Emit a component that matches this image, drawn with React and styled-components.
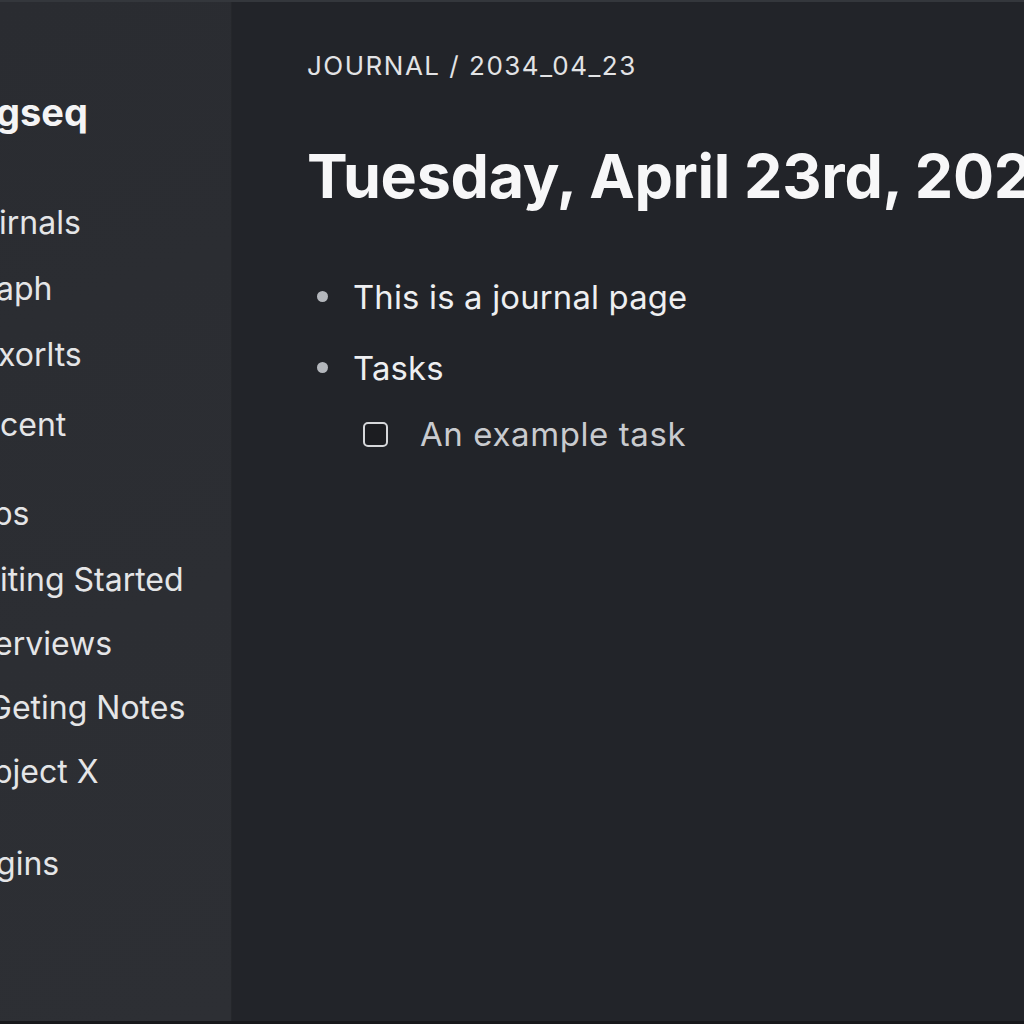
import styled, { createGlobalStyle } from "styled-components";

const GlobalStyle = createGlobalStyle`
  html, body {
    margin: 0;
    padding: 0;
    background: #222429;
  }
  body {
    font-family: Inter, "Noto Sans", "Liberation Sans", sans-serif;
    -webkit-font-smoothing: antialiased;
  }
`;

const Shell = styled.div`
  width: 1024px;
  height: 1024px;
  display: flex;
  overflow: hidden;
  border-top: 2px solid #34373c;
  border-bottom: 3px solid #17181b;
  box-sizing: border-box;
`;

const Sidebar = styled.aside`
  width: 232px;
  flex-shrink: 0;
  background: linear-gradient(160deg, #2a2c31 0%, #2c2e33 60%, #2d2f34 100%);
  border-right: 1px solid #25272b;
  overflow: hidden;
  padding-top: 86px;
  box-sizing: border-box;
  display: flex;
  flex-direction: column;
`;

const Logo = styled.div`
  font-size: 38px;
  line-height: 48px;
  font-weight: 700;
  color: #f4f4f5;
  margin-left: ${({ $shift }) => $shift}px;
  white-space: nowrap;
`;

const NavItem = styled.div`
  font-size: 32px;
  line-height: 64px;
  color: #e4e5e7;
  white-space: nowrap;
  margin-top: ${({ $gap }) => $gap || 0}px;
  margin-left: ${({ $shift }) => $shift || 0}px;
`;

const Main = styled.main`
  flex: 1;
  min-width: 0;
  background: #222429;
  padding: 46px 0 0 75px;
  box-sizing: border-box;
  overflow: hidden;
`;

const Breadcrumb = styled.div`
  font-size: 26px;
  line-height: 36px;
  letter-spacing: 1.5px;
  color: #e2e3e5;
  white-space: nowrap;
`;

const Title = styled.h1`
  margin: 54px 0 0;
  font-size: 61px;
  line-height: 76px;
  font-weight: 700;
  letter-spacing: -0.3px;
  color: #f7f7f8;
  white-space: nowrap;
`;

const Blocks = styled.div`
  margin-top: 47px;
  display: flex;
  flex-direction: column;
`;

const Block = styled.div`
  display: flex;
  align-items: center;
  height: ${({ $indent }) => ($indent ? 62 : 71)}px;
  padding-left: ${({ $indent }) => ($indent ? 56 : 10)}px;
`;

const Bullet = styled.span`
  width: 11px;
  height: 11px;
  border-radius: 50%;
  background: #b4b7bc;
  flex-shrink: 0;
  margin-right: 25px;
`;

const Checkbox = styled.span`
  width: 21px;
  height: 21px;
  border: 2px solid #d6d7da;
  border-radius: 5px;
  background: #1c1d21;
  flex-shrink: 0;
  margin-right: 32px;
`;

const BlockText = styled.span`
  font-size: ${({ $muted }) => ($muted ? 33 : 32.8)}px;
  letter-spacing: ${({ $muted }) => ($muted ? 0.6 : 0.2)}px;
  color: ${({ $muted }) => ($muted ? "#c9cbcf" : "#eeeff1")};
  white-space: nowrap;
`;

export default function App() {
  return (
    <>
      <GlobalStyle />
      <Shell>
        <Sidebar>
          <Logo $shift={-4}>gseq</Logo>
          <NavItem $gap={55} $shift={-1}>irnals</NavItem>
          <NavItem $gap={2} $shift={-4}>aph</NavItem>
          <NavItem $gap={2} $shift={-2}>xorlts</NavItem>
          <NavItem $gap={6}>cent</NavItem>
          <NavItem $gap={25} $shift={-7}>ps</NavItem>
          <NavItem $gap={2}>iting Started</NavItem>
          <NavItem $shift={-6}>erviews</NavItem>
          <NavItem $shift={-12}>Geting Notes</NavItem>
          <NavItem $shift={-7}>bject X</NavItem>
          <NavItem $gap={28} $shift={-4}>gins</NavItem>
        </Sidebar>
        <Main>
          <Breadcrumb>JOURNAL / 2034_04_23</Breadcrumb>
          <Title>Tuesday, April 23rd, 2024</Title>
          <Blocks>
            <Block>
              <Bullet />
              <BlockText>This is a journal page</BlockText>
            </Block>
            <Block>
              <Bullet />
              <BlockText>Tasks</BlockText>
            </Block>
            <Block $indent>
              <Checkbox />
              <BlockText $muted>An example task</BlockText>
            </Block>
          </Blocks>
        </Main>
      </Shell>
    </>
  );
}
